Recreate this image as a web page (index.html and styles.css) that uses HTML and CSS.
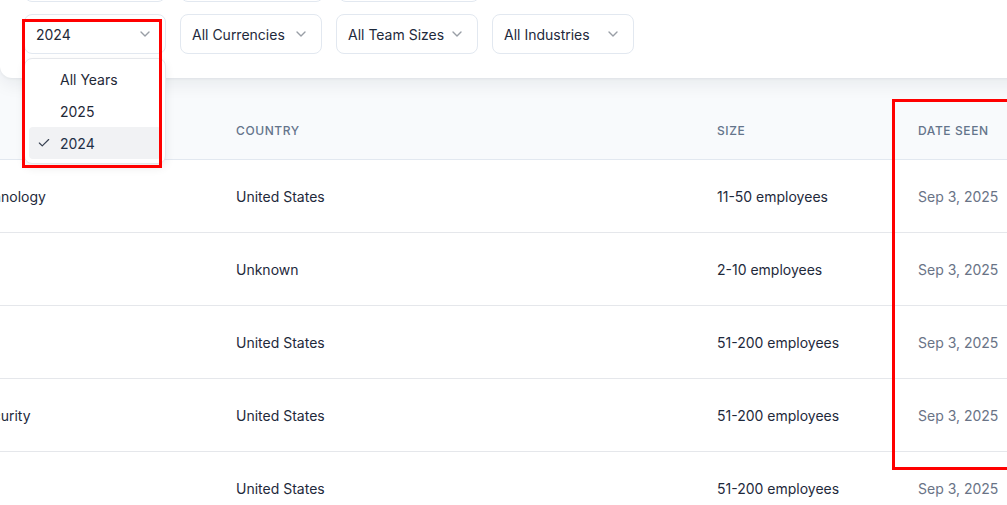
FILE: index.html
```html
<!DOCTYPE html>
<html lang="en">
<head>
<meta charset="utf-8">
<title>Companies</title>
<link rel="stylesheet" href="styles.css">
</head>
<body>
<div class="page">
  <section class="filters">
    <div class="filter-row">
      <div class="select w-a"></div>
      <div class="select w-b"></div>
      <div class="select w-a"></div>
    </div>
    <div class="filter-row">
      <button class="select open"><span class="value">2024</span><svg class="chev" viewBox="0 0 24 24"><path d="m6 9 6 6 6-6"/></svg></button>
      <button class="select"><span>All Currencies</span><svg class="chev" viewBox="0 0 24 24"><path d="m6 9 6 6 6-6"/></svg></button>
      <button class="select"><span>All Team Sizes</span><svg class="chev" viewBox="0 0 24 24"><path d="m6 9 6 6 6-6"/></svg></button>
      <button class="select"><span>All Industries</span><svg class="chev" viewBox="0 0 24 24"><path d="m6 9 6 6 6-6"/></svg></button>
    </div>
  </section>

  <div class="menu">
    <div class="item">All Years</div>
    <div class="item">2025</div>
    <div class="item selected"><svg class="check" viewBox="0 0 24 24"><path d="M20 6 9 17l-5-5"/></svg>2024</div>
  </div>

  <div class="table-wrap">
    <table class="companies">
      <colgroup>
        <col class="c-ind"><col class="c-country"><col class="c-size"><col class="c-date">
      </colgroup>
      <thead>
        <tr><th>Industry</th><th>Country</th><th>Size</th><th>Date Seen</th></tr>
      </thead>
      <tbody>
        <tr><td>Financial Technology</td><td>United States</td><td>11-50 employees</td><td class="date">Sep 3, 2025</td></tr>
        <tr><td></td><td>Unknown</td><td>2-10 employees</td><td class="date">Sep 3, 2025</td></tr>
        <tr><td></td><td>United States</td><td>51-200 employees</td><td class="date">Sep 3, 2025</td></tr>
        <tr><td>Computer Security</td><td>United States</td><td>51-200 employees</td><td class="date">Sep 3, 2025</td></tr>
        <tr><td></td><td>United States</td><td>51-200 employees</td><td class="date">Sep 3, 2025</td></tr>
      </tbody>
    </table>
  </div>

  <div class="mark mark-year"></div>
  <div class="mark mark-date"></div>
</div>
</body>
</html>
```

FILE: styles.css
```css
* { box-sizing: border-box; }

html, body {
  margin: 0;
  padding: 0;
}

body {
  background: #f8fafc;
  font-family: Inter, "Noto Sans", "Liberation Sans", sans-serif;
  color: #1e293b;
  overflow: hidden;
  width: 1007px;
  height: 505px;
}

.page {
  position: relative;
  width: 1007px;
  height: 505px;
  overflow: hidden;
}

/* Filter card */
.filters {
  position: relative;
  z-index: 2;
  margin-top: -62px;
  margin-right: -24px;
  padding: 24px 24px 24px 24px;
  background: #ffffff;
  border-radius: 0 0 12px 12px;
  box-shadow: 0 6px 18px rgba(15, 23, 42, 0.07), 0 1px 3px rgba(15, 23, 42, 0.05);
  display: flex;
  flex-direction: column;
  gap: 12px;
}

.filter-row {
  display: flex;
  gap: 14px;
}

.select {
  width: 142px;
  height: 40px;
  padding: 0 12px 0 11px;
  border: 1px solid #e2e8f0;
  border-radius: 8px;
  background: #ffffff;
  display: flex;
  align-items: center;
  justify-content: space-between;
  font-family: inherit;
  font-size: 14px;
  color: #1e293b;
  text-align: left;
}

.select span {
  white-space: nowrap;
}

.select .value {
  color: #1f2937;
}

.w-a { width: 142px; }
.w-b { width: 144px; }

.chev {
  width: 16px;
  height: 16px;
  flex: none;
  fill: none;
  stroke: #1e293b;
  stroke-width: 2;
  stroke-linecap: round;
  stroke-linejoin: round;
  opacity: 0.45;
}

/* Dropdown menu */
.menu {
  position: absolute;
  z-index: 3;
  left: 24px;
  top: 58px;
  width: 142px;
  padding: 4px;
  background: #ffffff;
  border: 1px solid #e5e7eb;
  border-radius: 8px;
  box-shadow: 0 4px 10px rgba(15, 23, 42, 0.08);
}

.item {
  position: relative;
  height: 32px;
  display: flex;
  align-items: center;
  padding-left: 31px;
  font-size: 14px;
  color: #1f2937;
  border-radius: 4px;
}

.item.selected {
  background: #f1f2f4;
  color: #1f3047;
}

.check {
  position: absolute;
  left: 8px;
  top: 9px;
  width: 14px;
  height: 14px;
  fill: none;
  stroke: #374151;
  stroke-width: 2;
  stroke-linecap: round;
  stroke-linejoin: round;
}

/* Table */
.table-wrap {
  margin-top: 22px;
  overflow: hidden;
}

.companies {
  margin-left: -118px;
  width: 1225px;
  table-layout: fixed;
  border-collapse: collapse;
}

.c-ind { width: 330px; }
.c-country { width: 481px; }
.c-size { width: 201px; }
.c-date { width: 213px; }

.companies th {
  height: 59px;
  padding: 2px 24px 0;
  text-align: left;
  font-size: 12px;
  font-weight: 500;
  letter-spacing: 0.05em;
  text-transform: uppercase;
  color: #64748b;
  border-bottom: 1px solid #e2e8f0;
  background: #f8fafc;
  white-space: nowrap;
}

.companies td {
  height: 73px;
  padding: 2px 24px 0;
  font-size: 14px;
  line-height: 20px;
  color: #1e293b;
  background: #ffffff;
  border-bottom: 1px solid #e5e7eb;
  white-space: nowrap;
}

.companies td.date {
  color: #697386;
}

/* Annotation marks */
.mark {
  position: absolute;
  z-index: 5;
  border: 3px solid #ff0000;
  pointer-events: none;
}

.mark-year {
  left: 22px;
  top: 19px;
  width: 140px;
  height: 149px;
}

.mark-date {
  left: 892px;
  top: 99px;
  width: 130px;
  height: 371px;
}
```
